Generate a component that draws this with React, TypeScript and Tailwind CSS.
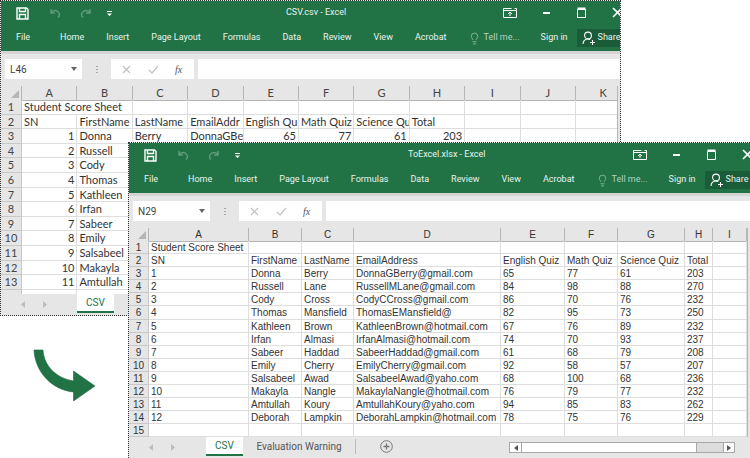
import React from 'react';
import { Lightbulb } from 'lucide-react';

const STUDENTS = [
  ['1', 'Donna', 'Berry', 'DonnaGBerry@gmail.com', '65', '77', '61', '203'],
  ['2', 'Russell', 'Lane', 'RussellMLane@gmail.com', '84', '98', '88', '270'],
  ['3', 'Cody', 'Cross', 'CodyCCross@gmail.com', '86', '70', '76', '232'],
  ['4', 'Thomas', 'Mansfield', 'ThomasEMansfield@', '82', '95', '73', '250'],
  ['5', 'Kathleen', 'Brown', 'KathleenBrown@hotmail.com', '67', '76', '89', '232'],
  ['6', 'Irfan', 'Almasi', 'IrfanAlmasi@hotmail.com', '74', '70', '93', '237'],
  ['7', 'Sabeer', 'Haddad', 'SabeerHaddad@gmail.com', '61', '68', '79', '208'],
  ['8', 'Emily', 'Cherry', 'EmilyCherry@gmail.com', '92', '58', '57', '207'],
  ['9', 'Salsabeel', 'Awad', 'SalsabeelAwad@yaho.com', '68', '100', '68', '236'],
  ['10', 'Makayla', 'Nangle', 'MakaylaNangle@hotmail.com', '76', '79', '77', '232'],
  ['11', 'Amtullah', 'Koury', 'AmtullahKoury@yaho.com', '94', '85', '83', '262'],
  ['12', 'Deborah', 'Lampkin', 'DeborahLampkin@hotmail.com', '78', '75', '76', '229'],
];
const HEADINGS = ['SN', 'FirstName', 'LastName', 'EmailAddress', 'English Quiz', 'Math Quiz', 'Science Quiz', 'Total'];
const TABS = ['Home', 'Insert', 'Page Layout', 'Formulas', 'Data', 'Review', 'View', 'Acrobat'];

function SaveIcon() {
  return (
    <svg width="13" height="13" viewBox="0 0 13 13" fill="none" stroke="white" strokeWidth="1.4">
      <path d="M1 1h9.5L12 2.5V12H1z" />
      <path d="M3.5 1v3.5h6V1M3.5 12V7.5h6V12" />
    </svg>
  );
}

function ArrowIcon({ flip }: { flip?: boolean }) {
  return (
    <svg width="13" height="12" viewBox="0 0 13 12" fill="none" stroke="#5f9a79" strokeWidth="1.5" className={flip ? '-scale-x-100' : ''}>
      <path d="M3 2v4h4M3.2 6C5 3 9 2.5 11 6c.8 1.6.2 3.4-1 4.5" />
    </svg>
  );
}

function WindowControls() {
  return (
    <div className="ml-auto flex items-center gap-[20px]">
      <svg width="16" height="14" viewBox="0 0 16 14" fill="none" stroke="white" strokeWidth="1">
        <path d="M1.5 2.5h8M12.5 2.5h2v9h-13v-9" />
        <path d="M1.5 4.5h13" />
        <path d="M8 10V6M6 8l2-2 2 2" />
      </svg>
      <svg width="16" height="14" viewBox="0 0 16 14" fill="white"><path d="M1 7h7v2H1z" transform="translate(4 -1)" /></svg>
      <svg width="16" height="14" viewBox="0 0 16 14" fill="none" stroke="white"><path d="M3.5 3.5h8v8h-8z" /><path d="M3.5 2.5h8" strokeWidth="2" /></svg>
      <svg width="16" height="14" viewBox="0 0 16 14" fill="none" stroke="white" strokeWidth="1.6" className="mr-[-6px] shrink-0"><path d="M3 2l9 9M12 2l-9 9" /></svg>
    </div>
  );
}

function Ribbon({ title, titleOffset }: { title: string; titleOffset: string }) {
  return (
    <div className="h-[50px] shrink-0 whitespace-nowrap bg-[#217346] font-['Roboto',sans-serif] text-[9px] text-[#e9f2ed]">
      <div className="flex h-[24px] items-center pl-[15px]">
        <div className={`flex items-center ${titleOffset}`}>
          <SaveIcon />
          <div className="ml-[19px] flex items-center gap-[19px]">
            <ArrowIcon />
            <ArrowIcon flip />
          </div>
          <svg width="7" height="7" viewBox="0 0 7 7" fill="white" className="ml-[13px]">
            <path d="M1 1h5v1H1zM1 3.5h5L3.5 6z" />
          </svg>
        </div>
        <span>{title}</span>
        <WindowControls />
      </div>
      <div className="flex h-[26px] items-center pl-[15px]">
        <span className="mr-[30px] w-[14px]">File</span>
        <div className="flex gap-[22px]">
          {TABS.map((tab) => <span key={tab}>{tab}</span>)}
        </div>
        <div className="ml-[21px] flex items-center gap-[3px] text-[#b4d0c0]">
          <Lightbulb size={13} strokeWidth={1.2} />
          <span>Tell me...</span>
        </div>
        <span className="ml-[21px]">Sign in</span>
        <div className="ml-[9px] flex h-[18px] flex-1 items-center gap-[3px] bg-[#1a5c38] pl-[5px]">
          <svg width="13" height="14" viewBox="0 0 13 14" fill="none" stroke="white" strokeWidth="1.1" className="shrink-0">
            <circle cx="6" cy="4.5" r="3.4" />
            <path d="M1 13c0-3 2-5 5-5 1 0 1.6.2 2.2.6M8 11.5h5M10.5 9v5" />
          </svg>
          <span>Share</span>
        </div>
      </div>
    </div>
  );
}

function FormulaBar({ cell }: { cell: string }) {
  return (
    <div className="flex h-[35px] shrink-0 items-start gap-[4px] border-t-[3px] border-[#d4d4d4] bg-[#e6e6e6] pl-[4px] pt-[5px]">
      <div className="flex h-[20px] w-[77px] items-center justify-between bg-white pl-[5px] pr-[5px] font-['Roboto',sans-serif] text-[10px] text-[#444]">
        {cell}
        <svg width="6" height="4" viewBox="0 0 6 4" fill="#666"><path d="M0 0h6L3 4z" /></svg>
      </div>
      <div className="mx-[9px] flex h-[20px] w-[3px] flex-col items-center justify-center gap-[2px]">
        <i className="h-[1px] w-[2px] bg-[#aaa]" />
        <i className="h-[1px] w-[2px] bg-[#aaa]" />
        <i className="h-[1px] w-[2px] bg-[#aaa]" />
      </div>
      <div className="flex h-[20px] w-[83px] items-center bg-white pl-[11px]">
        <svg width="9" height="9" viewBox="0 0 9 9" fill="none" stroke="#c2c2c2" strokeWidth="1.2"><path d="M1 1l7 7M8 1l-7 7" /></svg>
        <svg width="11" height="9" viewBox="0 0 11 9" fill="none" stroke="#c2c2c2" strokeWidth="1.2" className="ml-[17px]"><path d="M1 5l3 3 6-7" /></svg>
        <span className="ml-[16px] font-['Liberation_Serif',serif] text-[10px] italic text-[#555]">fx</span>
      </div>
      <div className="h-[20px] flex-1 bg-white" />
    </div>
  );
}

function BackSheet() {
  const rows: React.ReactNode[] = [];
  const cols = ['A', 'B', 'C', 'D', 'E', 'F', 'G', 'H', 'I', 'J', 'K'];
  const cell = "overflow-hidden whitespace-nowrap border-b border-r border-[#dedede] px-[2px] leading-[14px]";
  const rowHead = "border-b border-r border-[#c8c8c8] bg-[#e6e6e6] text-center leading-[14px] text-[#444]";

  rows.push(<div key="n1" className={rowHead}>1</div>);
  rows.push(<div key="title" className={`${cell} col-span-2`}>Student Score Sheet</div>);
  cols.slice(2).forEach((c) => rows.push(<div key={`t${c}`} className={cell} />));

  rows.push(<div key="n2" className={rowHead}>2</div>);
  ['SN', 'FirstName', 'LastName', 'EmailAddr', 'English Qu', 'Math Quiz', 'Science Qu', 'Total', '', '', ''].forEach((h, i) => {
    rows.push(<div key={`h${i}`} className={cell}>{h}</div>);
  });

  STUDENTS.slice(0, 11).forEach((s, r) => {
    rows.push(<div key={`n${r + 3}`} className={rowHead}>{r + 3}</div>);
    s.forEach((v, i) => {
      const right = i === 0 || i > 3;
      rows.push(<div key={`${r}-${i}`} className={`${cell} ${right ? 'text-right' : ''}`}>{v}</div>);
    });
    cols.slice(8).forEach((c) => rows.push(<div key={`${r}-${c}`} className={cell} />));
  });
  rows.push(<div key="n14" className={rowHead} />);
  cols.forEach((c) => rows.push(<div key={`e${c}`} className={cell} />));

  return (
    <div className="mr-[2px] flex-1 overflow-hidden border-r border-[#b5b5b5] bg-white font-['Lato',sans-serif] text-[11px] text-[#333]">
      <div className="grid h-[14px] grid-cols-[21px_repeat(11,55.4px)] bg-[#e6e6e6] text-[#444]">
        <div className="flex items-end justify-end border-b border-r border-[#b5b5b5] p-[2px]">
          <svg width="8" height="8" viewBox="0 0 8 8" fill="#b5b5b5"><path d="M8 0v8H0z" /></svg>
        </div>
        {cols.map((c) => <div key={c} className="border-b border-r border-[#b5b5b5] text-center leading-[14px]">{c}</div>)}
      </div>
      <div className="grid auto-rows-[14.6px] grid-cols-[21px_repeat(11,55.4px)]">{rows}</div>
    </div>
  );
}

function FrontSheet() {
  const cols = ['A', 'B', 'C', 'D', 'E', 'F', 'G', 'H', 'I'];
  const grid = "grid grid-cols-[20px_100px_53px_52px_147px_64px_53px_67px_28px_34px]";
  const cell = "overflow-hidden whitespace-nowrap border-b border-r border-[#dedede] pl-[2px] leading-[13px]";
  const rowHead = "border-b border-r border-[#c8c8c8] bg-[#e6e6e6] text-center leading-[13px] text-[#333]";
  const table = [HEADINGS, ...STUDENTS];

  return (
    <div className="mr-[2px] flex-1 overflow-hidden border-r border-[#b5b5b5] bg-white font-['Liberation_Sans',sans-serif] text-[10px] text-[#333]">
      <div className={`${grid} h-[13px] bg-[#e6e6e6]`}>
        <div className="flex items-end justify-end border-b border-r border-[#b5b5b5] p-[2px]">
          <svg width="8" height="8" viewBox="0 0 8 8" fill="#b5b5b5"><path d="M8 0v8H0z" /></svg>
        </div>
        {cols.map((c) => <div key={c} className="border-b border-r border-[#b5b5b5] text-center leading-[13px]">{c}</div>)}
      </div>
      <div className={`${grid} auto-rows-[13.1px]`}>
        <div className={rowHead}>1</div>
        <div className={cell}>Student Score Sheet</div>
        {cols.slice(1).map((c) => <div key={c} className={cell} />)}
        {table.map((row, r) => (
          <React.Fragment key={r}>
            <div className={rowHead}>{r + 2}</div>
            {row.map((v, i) => <div key={i} className={cell}>{v}</div>)}
            <div className={cell} />
          </React.Fragment>
        ))}
        <div className={rowHead}>15</div>
        {cols.map((c) => <div key={c} className={cell} />)}
      </div>
    </div>
  );
}

function SheetTabs({ left, children }: { left: string; children?: React.ReactNode }) {
  return (
    <div className="flex h-[21px] shrink-0 items-start bg-[#e6e6e6] font-['Roboto',sans-serif] text-[10px]">
      <div className={`flex ${left} items-center gap-[17px] pl-[20px] pt-[7px]`}>
        <svg width="5" height="7" viewBox="0 0 5 7" fill="#bdbdbd"><path d="M4 0v7L0 3.5z" /></svg>
        <svg width="5" height="7" viewBox="0 0 5 7" fill="#bdbdbd"><path d="M0 0v7l4-3.5z" /></svg>
      </div>
      <div className="flex h-[19px] w-[37px] items-center justify-center border-b-2 border-[#217346] bg-white text-[#217346]">CSV</div>
      {children}
    </div>
  );
}

export default function App() {
  return (
    <div className="relative h-[458px] w-[750px] overflow-hidden bg-white">
      {/* back window */}
      <div className="absolute left-0 top-0 flex h-[316px] w-[621px] flex-col overflow-hidden border border-dotted border-[#333] bg-[#e6e6e6]">
        <Ribbon title="CSV.csv - Excel" titleOffset="w-[270px]" />
        <FormulaBar cell="L46" />
        <BackSheet />
        <SheetTabs left="w-[76px]" />
      </div>

      {/* arrow between the windows */}
      <svg width="64" height="54" viewBox="33 349 64 54" className="absolute left-[33px] top-[349px]">
        <path d="M34 350H43C44 366 56 378 73.5 381V371L95 386L73.5 401V392C52 390 35 372 34 350Z" fill="#217346" stroke="#1c6a3f" strokeWidth="0.6" />
      </svg>

      {/* front window */}
      <div className="absolute left-[128px] top-[142px] flex h-[316px] w-[622px] flex-col overflow-hidden border border-b-0 border-r-0 border-dotted border-[#333] bg-[#e6e6e6]">
        <Ribbon title="ToExcel.xlsx - Excel" titleOffset="w-[264px]" />
        <FormulaBar cell="N29" />
        <FrontSheet />
        <SheetTabs left="w-[77px]">
          <div className="flex h-[19px] w-[112px] items-center justify-center text-[#555]">Evaluation Warning</div>
          <div className="mt-[2px] h-[15px] w-px bg-[#bdbdbd]" />
          <svg width="13" height="13" viewBox="0 0 13 13" fill="none" stroke="#777" className="ml-[24px] mt-[3px] shrink-0">
            <circle cx="6.5" cy="6.5" r="5.8" />
            <path d="M6.5 3.5v6M3.5 6.5h6" strokeWidth="1.3" />
          </svg>
          <div className="ml-[116px] mt-[5px] flex h-[11px] w-[226px] shrink-0 items-stretch border border-[#a8a8a8] bg-[#dcdcdc]">
            <div className="flex w-[11px] items-center justify-center bg-white">
              <svg width="4" height="6" viewBox="0 0 4 6" fill="#555"><path d="M4 0v6L0 3z" /></svg>
            </div>
            <div className="w-[176px] border-x border-[#a8a8a8] bg-white" />
            <div className="flex-1" />
            <div className="flex w-[11px] items-center justify-center border-l border-[#a8a8a8] bg-white">
              <svg width="4" height="6" viewBox="0 0 4 6" fill="#555"><path d="M0 0v6l4-3z" /></svg>
            </div>
          </div>
        </SheetTabs>
      </div>
    </div>
  );
}
